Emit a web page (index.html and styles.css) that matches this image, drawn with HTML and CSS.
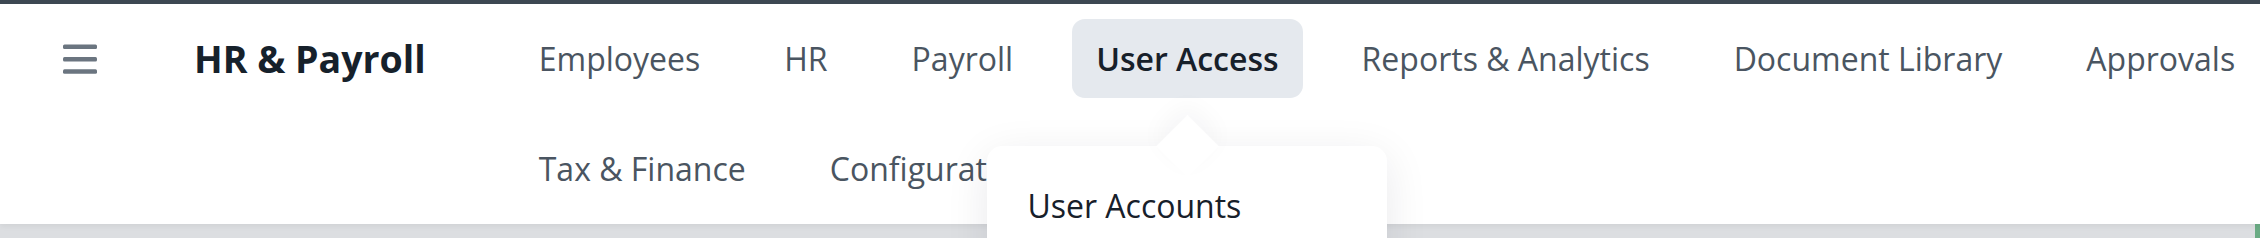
FILE: index.html
```html
<!DOCTYPE html>
<html lang="en">
<head>
<meta charset="utf-8">
<title>HR &amp; Payroll</title>
<link rel="stylesheet" href="styles.css">
</head>
<body>
<header class="topbar">
  <button class="menu-btn" aria-label="Menu">
    <svg width="34" height="30" viewBox="0 0 34 30">
      <rect x="0" y="0.5" width="34" height="4.5" rx="1.5" fill="#6b7580"/>
      <rect x="0" y="13" width="34" height="4.5" rx="1.5" fill="#6b7580"/>
      <rect x="0" y="25.3" width="34" height="4.5" rx="1.5" fill="#6b7580"/>
    </svg>
  </button>
  <div class="brand">HR &amp; Payroll</div>
  <nav class="nav">
    <a class="nav-item">Employees</a>
    <a class="nav-item">HR</a>
    <a class="nav-item">Payroll</a>
    <div class="nav-item active">User Access
      <div class="dropdown">
        <a class="dropdown-item">User Accounts</a>
      </div>
    </div>
    <a class="nav-item">Reports &amp; Analytics</a>
    <a class="nav-item">Document Library</a>
    <a class="nav-item">Approvals</a>
    <a class="nav-item">Tax &amp; Finance</a>
    <a class="nav-item">Configuration</a>
  </nav>
</header>
<div class="page">
  <div class="page-marker"></div>
</div>
</body>
</html>
```
FILE: styles.css
```css
* { box-sizing: border-box; }

html, body {
  margin: 0;
  height: 238px;
  overflow: hidden;
}

body {
  background: #dcdee1;
  font-family: "Open Sans", "Noto Sans", sans-serif;
}

.topbar {
  position: relative;
  z-index: 2;
  display: flex;
  align-items: flex-start;
  height: 224px;
  background: #ffffff;
  border-top: 4px solid #3d4852;
  padding: 15px 0 16px 63px;
  box-shadow: 0 2px 6px rgba(0, 0, 0, 0.06);
}

.menu-btn {
  flex: 0 0 auto;
  width: 34px;
  height: 79px;
  padding: 0;
  border: 0;
  background: none;
  display: flex;
  align-items: center;
  justify-content: center;
}

.menu-btn svg { display: block; }

.brand {
  flex: 0 0 auto;
  height: 79px;
  line-height: 79px;
  margin-left: 97px;
  font-size: 37.5px;
  font-weight: 700;
  color: #16212b;
  white-space: nowrap;
}

.nav {
  flex: 0 0 1800px;
  display: flex;
  flex-wrap: wrap;
  column-gap: 34px;
  row-gap: 31px;
  margin-left: 88px;
}

.nav-item {
  position: relative;
  height: 79px;
  padding: 0 25px;
  display: flex;
  align-items: center;
  font-size: 32px;
  color: #4a5561;
  border-radius: 13px;
  white-space: nowrap;
}

.nav-item.active {
  padding: 0 24px;
  background: #e5e9ee;
  font-weight: 600;
  color: #17202a;
}

.dropdown {
  position: absolute;
  top: 127px;
  left: 50%;
  transform: translateX(-50%);
  width: 400px;
  height: 160px;
  background: #ffffff;
  border-radius: 15px;
  padding-top: 40px;
  box-shadow: 0 10px 44px rgba(15, 23, 42, 0.09);
  z-index: 5;
}

.dropdown::before {
  content: "";
  position: absolute;
  top: -22px;
  left: 50%;
  width: 45px;
  height: 45px;
  margin-left: -22.5px;
  background: #ffffff;
  transform: rotate(45deg);
  box-shadow: -8px -8px 24px rgba(15, 23, 42, 0.04);
  z-index: -1;
}

.dropdown-item {
  display: block;
  padding-left: 40px;
  line-height: 40px;
  font-size: 32px;
  font-weight: 400;
  color: #17202a;
  white-space: nowrap;
}

.page {
  position: relative;
  height: 14px;
}

.page-marker {
  position: absolute;
  right: 0;
  top: 0;
  width: 5px;
  height: 14px;
  background: #6aab84;
}
```
